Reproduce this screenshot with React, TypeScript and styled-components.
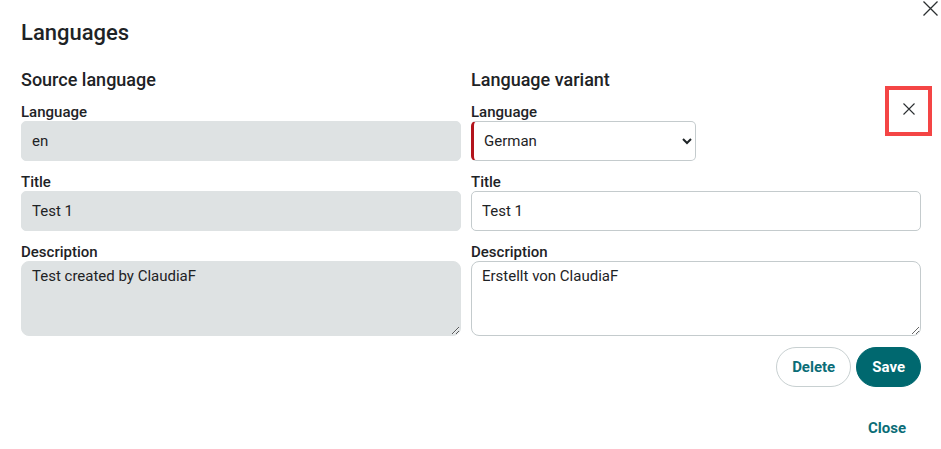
import React from "react";
import styled, { createGlobalStyle } from "styled-components";

const GlobalStyle = createGlobalStyle`
  html, body {
    margin: 0;
    padding: 0;
    background: #ffffff;
  }
  body {
    font-family: Roboto, "Liberation Sans", Arial, sans-serif;
    color: #1e2326;
  }
`;

const Dialog = styled.div`
  position: relative;
  width: 941px;
  height: 449px;
  box-sizing: border-box;
  padding: 19px 20px 0 21px;
  background: #fff;
  overflow: hidden;
`;

const DialogTitle = styled.h1`
  margin: 0 0 22px;
  font-size: 22px;
  line-height: 28px;
  font-weight: 500;
`;

const CornerClose = styled.button`
  position: absolute;
  top: 0;
  right: 2px;
  width: 18px;
  height: 17px;
  padding: 0;
  border: 0;
  background: none;
  display: flex;
  align-items: center;
  justify-content: center;
  cursor: pointer;
`;

const Columns = styled.div`
  display: grid;
  grid-template-columns: 440px 450px;
  column-gap: 10px;
`;

const Column = styled.section`
  display: flex;
  flex-direction: column;
`;

const SectionTitle = styled.h2`
  margin: 0 0 12px;
  font-size: 18px;
  line-height: 22px;
  font-weight: 500;
`;

const FieldList = styled.div`
  display: flex;
  flex-direction: column;
  gap: 12px;
`;

const Field = styled.div`
  display: flex;
  flex-direction: column;
`;

const Label = styled.label`
  font-size: 15px;
  line-height: 18px;
  font-weight: 500;
  color: #1e2326;
`;

const TextInput = styled.input<{ $readOnly?: boolean }>`
  box-sizing: border-box;
  height: 40px;
  width: 100%;
  padding: 0 10px;
  border: 1px solid ${(p) => (p.$readOnly ? "#dee2e3" : "#c4cbcd")};
  border-radius: 5px;
  background: ${(p) => (p.$readOnly ? "#dee2e3" : "#ffffff")};
  font-family: Roboto, "Liberation Sans", Arial, sans-serif;
  font-size: 15px;
  color: #1e2326;
  outline: none;
`;

const TextArea = styled.textarea<{ $readOnly?: boolean }>`
  box-sizing: border-box;
  height: 75px;
  width: 100%;
  padding: 5px 10px;
  border: 1px solid ${(p) => (p.$readOnly ? "#dee2e3" : "#c4cbcd")};
  border-radius: 8px;
  background: ${(p) => (p.$readOnly ? "#dee2e3" : "#ffffff")};
  font-family: Roboto, "Liberation Sans", Arial, sans-serif;
  font-size: 15px;
  line-height: 18px;
  color: #1e2326;
  resize: vertical;
  outline: none;
  display: block;
`;

const Select = styled.select`
  box-sizing: border-box;
  height: 40px;
  width: 225px;
  padding: 0 8px 0 6px;
  border: 1px solid #c4cbcd;
  border-left: 3px solid #b3141c;
  border-radius: 5px;
  background: #fff;
  font-family: Roboto, "Liberation Sans", Arial, sans-serif;
  font-size: 15px;
  color: #1e2326;
  outline: none;
`;

const RemoveVariant = styled.button`
  position: absolute;
  top: 86px;
  left: 885px;
  width: 47px;
  height: 50px;
  box-sizing: border-box;
  border: 4px solid #f44545;
  background: #fff;
  padding: 0 0 4px;
  display: flex;
  align-items: center;
  justify-content: center;
  cursor: pointer;
`;

const Actions = styled.div`
  display: flex;
  justify-content: flex-end;
  gap: 5px;
  margin-top: 11px;
`;

const PillButton = styled.button<{ $primary?: boolean }>`
  height: 40px;
  padding: 0 15px;
  border-radius: 20px;
  border: 1px solid ${(p) => (p.$primary ? "#00686f" : "#c8d0d1")};
  background: ${(p) => (p.$primary ? "#00686f" : "#ffffff")};
  color: ${(p) => (p.$primary ? "#ffffff" : "#0b6d77")};
  font-family: Roboto, "Liberation Sans", Arial, sans-serif;
  font-size: 15px;
  font-weight: 700;
  cursor: pointer;
`;

const Footer = styled.div`
  display: flex;
  justify-content: flex-end;
  margin-top: 30px;
`;

const TextButton = styled.button`
  padding: 0 15px;
  height: 22px;
  border: 0;
  background: none;
  color: #0b6d77;
  font-family: Roboto, "Liberation Sans", Arial, sans-serif;
  font-size: 15px;
  font-weight: 700;
  cursor: pointer;
`;

const Cross: React.FC<{ size: number; stroke?: number }> = ({ size, stroke = 1.3 }) => (
  <svg width={size} height={size} viewBox={`0 0 ${size} ${size}`} fill="none">
    <path d={`M0.5 0.5 L${size - 0.5} ${size - 0.5} M${size - 0.5} 0.5 L0.5 ${size - 0.5}`} stroke="#2b2f31" strokeWidth={stroke} />
  </svg>
);

export default function App() {
  return (
    <>
      <GlobalStyle />
      <Dialog>
        <CornerClose aria-label="Close dialog">
          <Cross size={15} />
        </CornerClose>
        <DialogTitle>Languages</DialogTitle>
        <Columns>
          <Column>
            <SectionTitle>Source language</SectionTitle>
            <FieldList>
              <Field>
                <Label>Language</Label>
                <TextInput $readOnly readOnly value="en" />
              </Field>
              <Field>
                <Label>Title</Label>
                <TextInput $readOnly readOnly value="Test 1" />
              </Field>
              <Field>
                <Label>Description</Label>
                <TextArea $readOnly readOnly value="Test created by ClaudiaF" />
              </Field>
            </FieldList>
          </Column>
          <Column>
            <SectionTitle>Language variant</SectionTitle>
            <FieldList>
              <Field>
                <Label>Language</Label>
                <Select defaultValue="de">
                  <option value="de">German</option>
                  <option value="fr">French</option>
                </Select>
              </Field>
              <Field>
                <Label>Title</Label>
                <TextInput defaultValue="Test 1" />
              </Field>
              <Field>
                <Label>Description</Label>
                <TextArea defaultValue="Erstellt von ClaudiaF" />
              </Field>
            </FieldList>
            <Actions>
              <PillButton>Delete</PillButton>
              <PillButton $primary>Save</PillButton>
            </Actions>
          </Column>
        </Columns>
        <RemoveVariant aria-label="Remove variant">
          <Cross size={12} stroke={1.1} />
        </RemoveVariant>
        <Footer>
          <TextButton>Close</TextButton>
        </Footer>
      </Dialog>
    </>
  );
}
